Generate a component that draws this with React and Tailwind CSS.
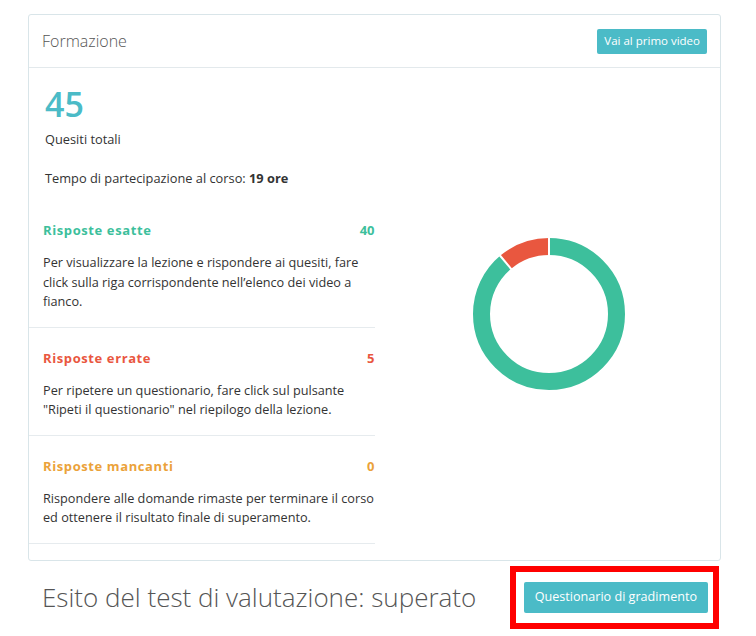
import React from 'react';

const stats = [
  {
    label: 'Risposte esatte',
    value: 40,
    color: 'text-[#3dbf9c]',
    text: 'Per visualizzare la lezione e rispondere ai quesiti, fare click sulla riga corrispondente nell’elenco dei video a fianco.',
  },
  {
    label: 'Risposte errate',
    value: 5,
    color: 'text-[#e9573f]',
    text: 'Per ripetere un questionario, fare click sul pulsante "Ripeti il questionario" nel riepilogo della lezione.',
  },
  {
    label: 'Risposte mancanti',
    value: 0,
    color: 'text-[#eba23a]',
    text: 'Rispondere alle domande rimaste per terminare il corso ed ottenere il risultato finale di superamento.',
  },
];

// simple donut, segments start at top and go clockwise
const Donut = ({ data, size = 154, thickness = 17 }) => {
  const total = data.reduce((s, d) => s + d.value, 0);
  const c = size / 2;
  const r = c - thickness / 2 - 1;
  const circ = 2 * Math.PI * r;
  let offset = 0;
  return (
    <svg width={size} height={size} viewBox={`0 0 ${size} ${size}`}>
      <g transform={`rotate(-90 ${c} ${c})`}>
        {data.filter(d => d.value > 0).map((d, i) => {
          const len = (d.value / total) * circ;
          const el = (
            <circle
              key={i}
              cx={c}
              cy={c}
              r={r}
              fill="none"
              stroke={d.color}
              strokeWidth={thickness}
              strokeDasharray={`${len} ${circ - len}`}
              strokeDashoffset={-offset}
            />
          );
          offset += len;
          return el;
        })}
        {/* white separators */}
        {(() => {
          let acc = 0;
          return data.filter(d => d.value > 0).map((d, i) => {
            const a = (acc / total) * 2 * Math.PI;
            acc += d.value;
            return (
              <line
                key={'s' + i}
                x1={c + (r - thickness / 2 - 1) * Math.cos(a)}
                y1={c + (r - thickness / 2 - 1) * Math.sin(a)}
                x2={c + (r + thickness / 2 + 1) * Math.cos(a)}
                y2={c + (r + thickness / 2 + 1) * Math.sin(a)}
                stroke="#fff"
                strokeWidth="2"
              />
            );
          });
        })()}
      </g>
    </svg>
  );
};

export default function App() {
  return (
    <div
      className="min-h-[636px] bg-white pt-[14px] text-[#333]"
      style={{ fontFamily: '"Open Sans", "Liberation Sans", sans-serif' }}
    >
      <div className="ml-[28px] w-[693px]">
        {/* Card */}
        <div className="rounded-[3px] border border-[#d9e5e9] bg-white">
          <div className="flex h-[53px] items-center justify-between border-b border-[#e3e9ec] px-[13px]">
            <h3 className="text-[16px] font-light text-[#555]">Formazione</h3>
            <button className="h-[25px] rounded-[2px] bg-[#4bbbc7] px-[7px] text-[11.5px] text-white">
              Vai al primo video
            </button>
          </div>

          <div className="grid grid-cols-2 pb-[16px]">
            <div>
              <div className="px-[14px] pt-[18px]">
                <div className="pl-[2px] text-[34px] font-semibold leading-[37px] text-[#4bbbc7]">45</div>
                <p className="mt-[6px] pl-[2px] text-[12.8px] leading-[20px]">Quesiti totali</p>
                <p className="mt-[19px] pl-[2px] text-[12.8px] leading-[20px]">
                  Tempo di partecipazione al corso: <b className="font-bold">19 ore</b>
                </p>
              </div>
              <div className="mt-[12px]">
                {stats.map((s, i) => (
                  <div key={i} className="border-b border-[#e6ebee] pb-[15px] pl-[14px] pr-0 pt-[20px]">
                    <div className={`flex justify-between text-[13px] font-bold leading-[20px] tracking-[0.6px] ${s.color}`}>
                      <span>{s.label}</span>
                      <span className="tracking-normal">{s.value}</span>
                    </div>
                    <p className="mt-[13px] text-[12.7px] leading-[19.5px]">{s.text}</p>
                  </div>
                ))}
              </div>
            </div>
            <div className="flex items-center justify-center pl-[3px] pt-[16px]">
              <Donut
                data={[
                  { value: 40, color: '#3dbf9c' },
                  { value: 5, color: '#e9573f' },
                  { value: 0, color: '#eba23a' },
                ]}
              />
            </div>
          </div>
        </div>

        {/* Esito */}
        <div className="mt-[5px] flex items-center justify-between pl-[14px] pr-[2px]">
          <h2 className="text-[26px] font-light text-[#555]">Esito del test di valutazione: superato</h2>
          <div className="border-[6px] border-[#ff0000] pb-[10px] pl-[8px] pr-[5px] pt-[10px]">
            <button className="h-[31px] rounded-[2px] bg-[#4bbbc7] px-[11px] text-[12.6px] text-white">
              Questionario di gradimento
            </button>
          </div>
        </div>
      </div>
    </div>
  );
}
